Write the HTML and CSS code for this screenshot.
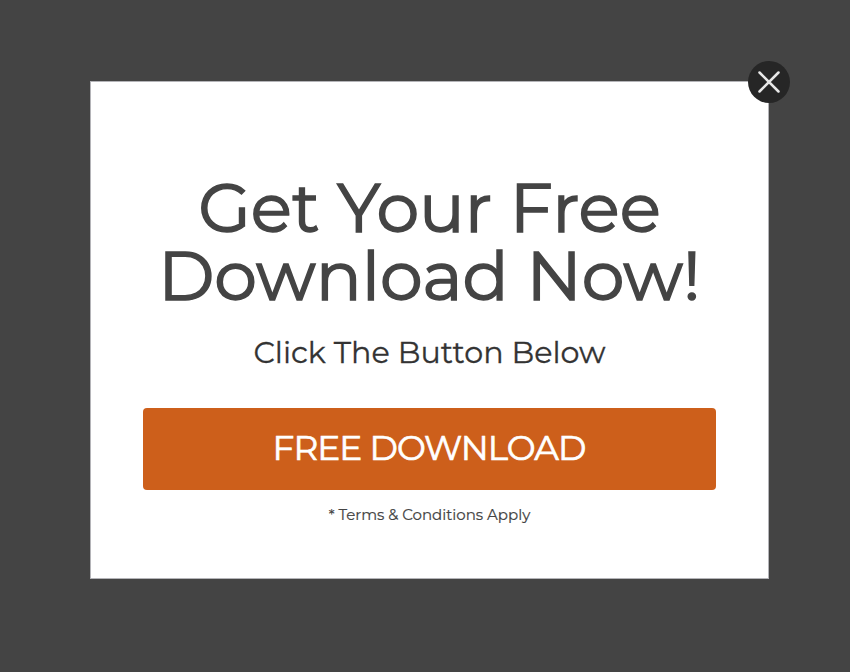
FILE: index.html
```html
<!DOCTYPE html>
<html lang="en">
<head>
<meta charset="utf-8">
<title>Free Download</title>
<link rel="stylesheet" href="styles.css">
</head>
<body>
<main class="modal">
<h1 class="title">Get Your Free<br>Download Now!</h1>
<p class="subtitle">Click The Button Below</p>
<button class="cta">FREE DOWNLOAD</button>
<p class="terms">* Terms &amp; Conditions Apply</p>
<button class="close" aria-label="Close"><svg viewBox="0 0 42 42"><path d="M11.5 11.5 30.5 30.5M30.5 11.5 11.5 30.5"/></svg></button>
</main>
</body>
</html>
```
FILE: styles.css
```css
* { box-sizing: border-box; }
body { margin: 0; min-height: 672px; background: #444; padding: 81px 81px 0 90px; font-family: Montserrat, Lato, sans-serif; color: #444; }
.modal { position: relative; width: 679px; height: 498px; background: #fff; border: 1px solid #b4b4b8; padding: 92px 52px 0; display: flex; flex-direction: column; align-items: center; white-space: nowrap; }
.title { margin: 0; font-size: 68px; line-height: 68px; font-weight: 400; text-align: center; -webkit-text-stroke: 1.5px #444; }
.subtitle { margin: 23px 0 0; font-size: 30.2px; line-height: 40px; color: #333; -webkit-text-stroke: .3px #333; }
.cta { margin: 35px 0 0; width: 573px; height: 82px; padding: 0 1px 2px 0; border: 0; border-radius: 4px; background: #cd5f1b; color: #fff; font: 400 34.4px/80px Montserrat, Lato, sans-serif; letter-spacing: -.95px; text-align: center; -webkit-text-stroke: .7px #fff; }
.terms { margin: 15px 0 0; font-size: 15px; line-height: 20px; color: #444; -webkit-text-stroke: .2px #444; }
.close { position: absolute; top: -21.5px; right: -21.5px; width: 42px; height: 42px; padding: 0; border: 0; border-radius: 50%; background: #262626; }
.close svg { display: block; width: 42px; height: 42px; fill: none; stroke: #e8e8e8; stroke-width: 2.5; stroke-linecap: round; }
```
